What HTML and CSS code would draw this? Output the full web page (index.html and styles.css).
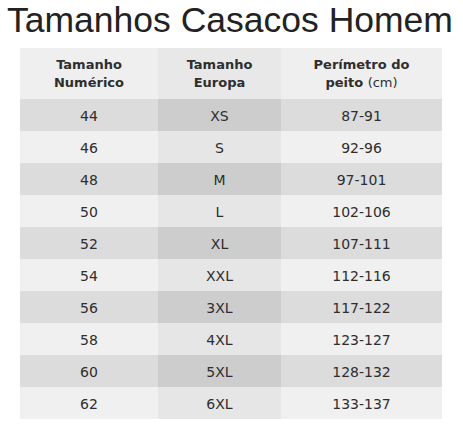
FILE: index.html
```html
<!DOCTYPE html>
<html lang="pt">
<head>
<meta charset="utf-8">
<title>Tamanhos Casacos Homem</title>
<link rel="stylesheet" href="styles.css">
</head>
<body>
<h1 class="title">Tamanhos Casacos Homem</h1>
<table class="sizes">
  <colgroup>
    <col class="c1"><col class="c2"><col class="c3">
  </colgroup>
  <thead>
    <tr>
      <th>Tamanho<br>Numérico</th>
      <th class="mid">Tamanho<br>Europa</th>
      <th>Perímetro do<br>peito <span class="unit">(cm)</span></th>
    </tr>
  </thead>
  <tbody>
    <tr><td>44</td><td class="mid">XS</td><td>87-91</td></tr>
    <tr><td>46</td><td class="mid">S</td><td>92-96</td></tr>
    <tr><td>48</td><td class="mid">M</td><td>97-101</td></tr>
    <tr><td>50</td><td class="mid">L</td><td>102-106</td></tr>
    <tr><td>52</td><td class="mid">XL</td><td>107-111</td></tr>
    <tr><td>54</td><td class="mid">XXL</td><td>112-116</td></tr>
    <tr><td>56</td><td class="mid">3XL</td><td>117-122</td></tr>
    <tr><td>58</td><td class="mid">4XL</td><td>123-127</td></tr>
    <tr><td>60</td><td class="mid">5XL</td><td>128-132</td></tr>
    <tr><td>62</td><td class="mid">6XL</td><td>133-137</td></tr>
  </tbody>
</table>
</body>
</html>
```
FILE: styles.css
```css
html, body {
  margin: 0;
  padding: 0;
  background: #ffffff;
}
.title {
  margin: 0;
  padding-left: 7px;
  font-family: "Liberation Sans", Arial, sans-serif;
  font-weight: normal;
  font-size: 35.5px;
  line-height: 40px;
  color: #222222;
  white-space: nowrap;
}
.sizes {
  margin: 8px 0 0 20px;
  width: 422px;
  border-collapse: collapse;
  table-layout: fixed;
  font-family: "DejaVu Sans", Verdana, sans-serif;
  color: #2e2e2e;
}
.c1 { width: 138px; }
.c2 { width: 123px; }
.c3 { width: 161px; }
.sizes th, .sizes td {
  padding: 0;
  text-align: center;
}
.sizes th {
  height: 51px;
  font-size: 13px;
  line-height: 18px;
  font-weight: bold;
  background: #efefef;
  vertical-align: middle;
}
.sizes th.mid { background: #e8e8e8; }
.unit { font-weight: normal; }
.sizes td {
  height: 32px;
  font-size: 14px;
  line-height: 18px;
  padding-top: 2px;
  box-sizing: border-box;
  background: #f0f0f0;
}
.sizes td.mid { background: #e6e6e6; }
.sizes tbody tr:nth-child(odd) td { background: #dcdcdc; }
.sizes tbody tr:nth-child(odd) td.mid { background: #cdcdcd; }
```
